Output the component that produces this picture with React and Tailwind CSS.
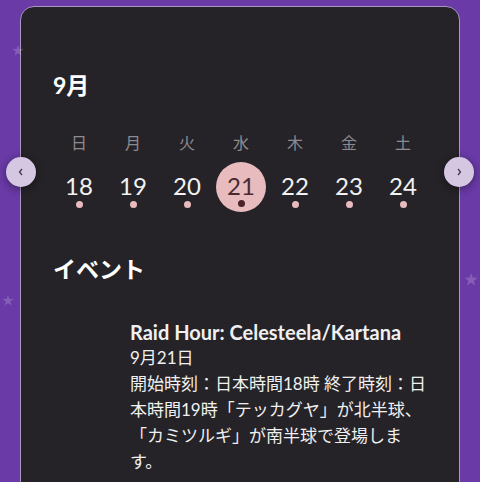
import React from "react";

const days = ["日", "月", "火", "水", "木", "金", "土"];
const dates = [18, 19, 20, 21, 22, 23, 24];

function NavButton({ side }) {
  return (
    <button
      className={
        (side === "left" ? "left-[6px] " : "right-[6px] ") +
        "absolute top-[157px] flex h-[30px] w-[30px] items-center justify-center rounded-full bg-[#d5c7e2] shadow-[0_2px_8px_rgba(0,0,0,0.45)]"
      }
    >
      <svg width="10" height="10" viewBox="0 0 10 10" fill="none" stroke="#3a3340" strokeWidth="1.2">
        <path d={side === "left" ? "M6 2 L3.5 5 L6 8" : "M4 2 L6.5 5 L4 8"} />
      </svg>
    </button>
  );
}

export default function App() {
  return (
    <div
      className="relative w-[480px] h-[482px] overflow-hidden bg-[#6a3aa7] px-5 pt-[6px]"
      style={{ fontFamily: 'Lato, "Noto Sans CJK JP", sans-serif' }}
    >
      <span className="absolute left-[12px] top-[42px] text-[12px] text-white/20">★</span>
      <span className="absolute left-[2px] top-[292px] text-[12px] text-white/20">★</span>
      <span className="absolute right-[2px] top-[268px] text-[14px] text-white/20">★</span>

      <div className="h-[520px] rounded-[14px] border border-[#a996c4] bg-[#252328] px-8 pt-[62px]">
        <h2 className="text-[23px] leading-[32px] font-bold text-white">9月</h2>

        <div className="mt-[30px] -ml-[1px] grid w-[378px] grid-cols-7">
          {days.map((d) => (
            <div key={d} className="text-center text-[16px] leading-[24px] text-[#8d8b90]">
              {d}
            </div>
          ))}
        </div>

        <div className="mt-[7px] -ml-[1px] grid w-[378px] grid-cols-7">
          {dates.map((n) => {
            const sel = n === 21;
            return (
              <div key={n} className="flex justify-center">
                <div
                  className={
                    sel
                      ? "flex h-[50px] w-[50px] flex-col items-center rounded-full bg-[#e8bbbe] pt-[12px] text-[#4a2a30]"
                      : "flex h-[50px] w-[50px] flex-col items-center pt-[12px] text-[#f2f2f2]"
                  }
                >
                  <span className="text-[24px] leading-[24px]">{n}</span>
                  <span
                    className={
                      sel
                        ? "mt-[2px] h-[7px] w-[7px] rounded-full bg-[#4a2228]"
                        : "mt-[3px] h-[7px] w-[7px] rounded-full bg-[#e8bbbe]"
                    }
                  />
                </div>
              </div>
            );
          })}
        </div>

        <h2 className="mt-[41px] text-[23px] leading-[32px] font-bold text-white">イベント</h2>

        <div className="mt-[34px] ml-[77px] w-[303px] text-[#f0f0f0]">
          <div className="text-[20px] leading-[26px] font-bold">Raid Hour: Celesteela/Kartana</div>
          <div className="text-[17px] leading-[26px]">9月21日</div>
          <p className="text-[17px] leading-[26px]">
            開始時刻：日本時間18時 終了時刻：日本時間19時「テッカグヤ」が北半球、「カミツルギ」が南半球で登場します。
          </p>
        </div>
      </div>

      <NavButton side="left" />
      <NavButton side="right" />
    </div>
  );
}
